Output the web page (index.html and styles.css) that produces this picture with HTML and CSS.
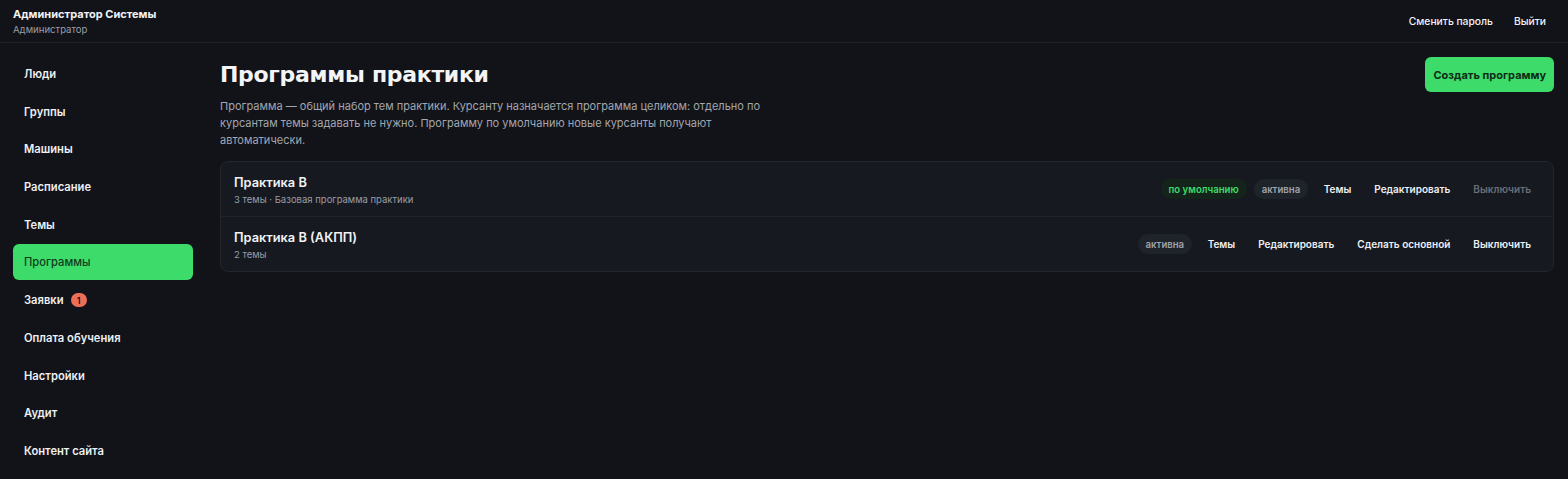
FILE: index.html
```html
<!DOCTYPE html>
<html lang="ru">
<head>
    <meta charset="UTF-8">
    <title>Программы практики</title>
    <meta name="viewport" content="width=device-width, initial-scale=1">
    <link rel="stylesheet" href="styles.css">
</head>
<body>
<div class="topbar">
    <div class="user">
        <div class="user-name">Администратор Системы</div>
        <div class="user-role">Администратор</div>
    </div>
    <div class="top-links">
        <a href="#">Сменить пароль</a>
        <a href="#">Выйти</a>
    </div>
</div>
<div class="layout">
    <nav class="sidebar">
        <a class="nav-item" href="#">Люди</a>
        <a class="nav-item" href="#">Группы</a>
        <a class="nav-item" href="#">Машины</a>
        <a class="nav-item" href="#">Расписание</a>
        <a class="nav-item" href="#">Темы</a>
        <a class="nav-item active" href="#">Программы</a>
        <a class="nav-item" href="#">Заявки <span class="count">1</span></a>
        <a class="nav-item" href="#">Оплата обучения</a>
        <a class="nav-item" href="#">Настройки</a>
        <a class="nav-item" href="#">Аудит</a>
        <a class="nav-item" href="#">Контент сайта</a>
    </nav>
    <main class="content">
        <div class="page-head">
            <h1>Программы практики</h1>
            <button class="btn-primary">Создать программу</button>
        </div>
        <p class="lead">Программа — общий набор тем практики. Курсанту назначается программа целиком: отдельно по курсантам темы задавать не нужно. Программу по умолчанию новые курсанты получают автоматически.</p>
        <div class="list">
            <div class="row">
                <div class="row-info">
                    <div class="row-title">Практика B</div>
                    <div class="row-sub">3 темы · Базовая программа практики</div>
                </div>
                <div class="row-actions">
                    <span class="pill pill-default">по умолчанию</span>
                    <span class="pill">активна</span>
                    <button class="link">Темы</button>
                    <button class="link">Редактировать</button>
                    <button class="link" disabled>Выключить</button>
                </div>
            </div>
            <div class="row">
                <div class="row-info">
                    <div class="row-title">Практика B (АКПП)</div>
                    <div class="row-sub">2 темы</div>
                </div>
                <div class="row-actions">
                    <span class="pill">активна</span>
                    <button class="link">Темы</button>
                    <button class="link">Редактировать</button>
                    <button class="link">Сделать основной</button>
                    <button class="link">Выключить</button>
                </div>
            </div>
        </div>
    </main>
</div>
</body>
</html>
```

FILE: styles.css
```css
body { background: #111319; color: #e9eaee; font-family: Inter, "Noto Sans", sans-serif; margin: 0; padding: 0; }
a { color: inherit; text-decoration: none; }
button { font-family: inherit; }

.topbar { display: flex; justify-content: space-between; align-items: center; height: 42px; padding: 0 13px; border-bottom: 1px solid #1e2128; }
.user { padding-top: 2px; }
.user-name { font-size: 11px; font-weight: 700; color: #f1f2f5; line-height: 15px; }
.user-role { font-size: 9.6px; color: #9a9da6; line-height: 15px; }
.top-links { display: flex; gap: 21px; font-size: 10.3px; font-weight: 500; color: #f1f2f5; padding-right: 9px; }

.layout { display: flex; }
.sidebar { width: 180px; padding: 13px 13px; display: flex; flex-direction: column; gap: 1.7px; }
.nav-item { display: flex; align-items: center; gap: 7px; height: 36px; padding: 0 11px; border-radius: 6px; font-size: 11.2px; font-weight: 600; color: #eef0f3; }
.nav-item.active { background: #3ddc6a; color: #0f3b1c; font-weight: 500; }
.count { display: inline-flex; align-items: center; justify-content: center; width: 16px; height: 14px; border-radius: 8px; background: #ec6e58; color: #1a0e0c; font-size: 9px; font-weight: 600; }

.content { flex: 1; padding: 14px 14px 0 14px; }
.page-head { display: flex; justify-content: space-between; align-items: center; }
h1 { margin: 0; font-family: "DejaVu Sans", sans-serif; font-size: 22px; font-weight: 800; letter-spacing: -0.3px; color: #f3f4f6; }
.btn-primary { height: 35px; padding: 0 8px; border: none; border-radius: 6px; background: #3ddc6a; color: #0d2b16; font-size: 11px; font-weight: 700; cursor: pointer; }
.lead { max-width: 560px; margin: 6px 0 12px; font-size: 11px; line-height: 17px; color: #a3a6ae; }

.list { background: #161920; border: 1px solid #23262e; border-radius: 8px; }
.row { display: flex; justify-content: space-between; align-items: center; height: 54px; padding: 0 13px; }
.row + .row { border-top: 1px solid #1f2229; }
.row-title { font-size: 12.8px; font-weight: 600; color: #f1f2f5; line-height: 18px; }
.row-sub { font-size: 9.5px; color: #9a9da6; margin-top: 2px; }
.row-actions { display: flex; align-items: center; }
.pill { display: inline-flex; align-items: center; height: 20px; padding: 0 8px; margin-right: 4px; border-radius: 10px; background: #1f232a; color: #9fa2aa; font-size: 9.6px; font-weight: 600; }
.pill + .pill { margin-left: 3px; }
.pill-default { background: #14241a; color: #3ddc6a; }
.link { background: none; border: none; padding: 4px 11.5px; color: #eef0f3; font-size: 10px; font-weight: 600; cursor: pointer; }
.link:last-child { padding-right: 9px; }
.link:disabled { color: #6b6e76; cursor: default; }
```
